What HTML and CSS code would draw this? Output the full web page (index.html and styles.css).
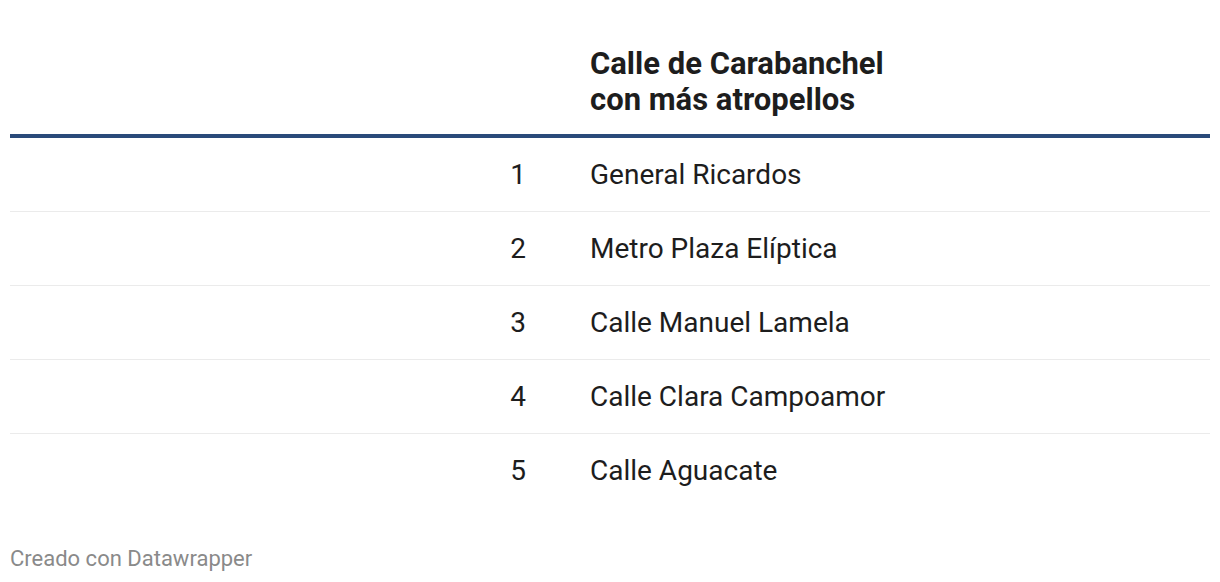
FILE: index.html
```html
<!DOCTYPE html>
<html>
<head>
<meta charset="utf-8">
<link rel="stylesheet" href="styles.css">
</head>
<body>
<div class="chart">
  <table class="tbl">
    <thead>
      <tr>
        <th class="num"></th>
        <th class="name">Calle de Carabanchel<br>con más atropellos</th>
      </tr>
    </thead>
    <tbody>
      <tr><td class="num">1</td><td class="name">General Ricardos</td></tr>
      <tr><td class="num">2</td><td class="name">Metro Plaza Elíptica</td></tr>
      <tr><td class="num">3</td><td class="name">Calle Manuel Lamela</td></tr>
      <tr><td class="num">4</td><td class="name">Calle Clara Campoamor</td></tr>
      <tr><td class="num">5</td><td class="name">Calle Aguacate</td></tr>
    </tbody>
  </table>
  <div class="footer">Creado con Datawrapper</div>
</div>
</body>
</html>
```
FILE: styles.css
```css
html, body {
  margin: 0;
  padding: 0;
  background: #ffffff;
}
body {
  font-family: Roboto, "Liberation Sans", sans-serif;
  color: #1d1d1d;
}
.chart {
  padding: 46px 10px 0 10px;
}
.tbl {
  width: 100%;
  border-collapse: collapse;
}
.tbl th {
  font-weight: 700;
  font-size: 31px;
  line-height: 36px;
  text-align: left;
  vertical-align: bottom;
  padding: 0 0 16px 0;
  border-bottom: 4px solid #2a4a7a;
}
.tbl td {
  font-size: 28px;
  line-height: 32px;
  height: 73px;
  padding: 0;
  border-bottom: 1px solid #ebebeb;
  vertical-align: middle;
}
.tbl tbody tr:last-child td {
  border-bottom: none;
}
.tbl .num {
  width: 516px;
  text-align: right;
  padding-right: 64px;
}
.tbl .name {
  text-align: left;
}
.footer {
  margin-top: 39px;
  font-size: 22px;
  color: #8a8a8a;
}
```
